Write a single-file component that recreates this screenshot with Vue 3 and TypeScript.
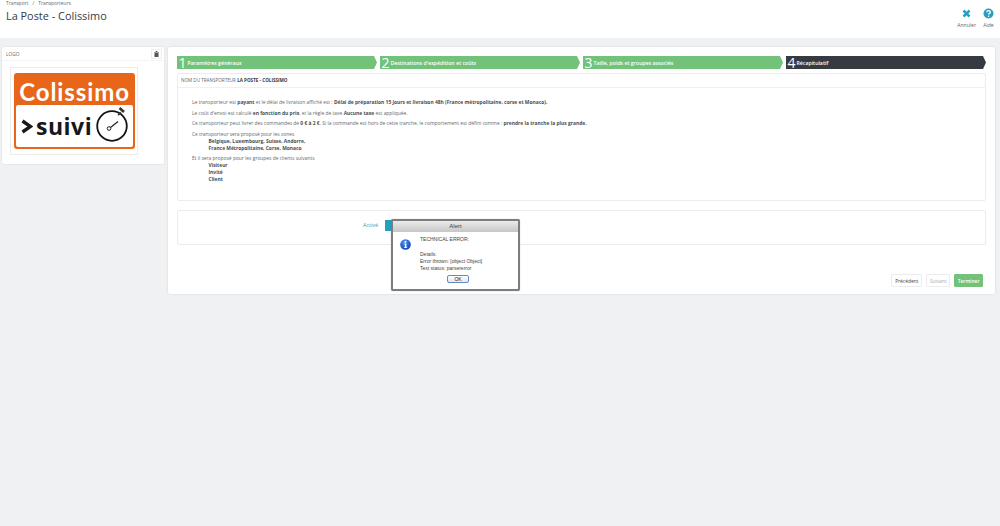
<script setup lang="ts">
const steps = [
  { n: '1', label: 'Paramètres généraux' },
  { n: '2', label: "Destinations d'expédition et coûts" },
  { n: '3', label: 'Taille, poids et groupes associés' },
  { n: '4', label: 'Récapitulatif', current: true },
]
</script>

<template>
  <div class="page">
    <header class="head">
      <div class="head-left">
        <div class="crumbs"><span>Transport</span><span>/</span><span>Transporteurs</span></div>
        <h1>La Poste - Colissimo</h1>
      </div>
      <div class="tools">
        <div class="tool">
          <svg width="11" height="11" viewBox="0 0 11 11"><path d="M1.600 3.400 3.400 1.600 5.500 3.700 7.600 1.600 9.400 3.400 7.300 5.500 9.400 7.600 7.600 9.400 5.500 7.300 3.400 9.400 1.600 7.600 3.700 5.500Z" fill="#25a0c0" /></svg>
          <span>Annuler</span>
        </div>
        <div class="tool">
          <svg width="11" height="11" viewBox="0 0 11 11"><circle cx="5.500" cy="5.500" r="5" fill="#25a0c0" /><path d="M3.700 4.300C3.800 3.200 4.500 2.600 5.500 2.600 6.600 2.600 7.400 3.300 7.400 4.200 7.400 5.300 5.600 5.500 5.600 6.600" fill="none" stroke="#fff" stroke-width="1.300" /><circle cx="5.600" cy="8.200" r=".8" fill="#fff" /></svg>
          <span>Aide</span>
        </div>
      </div>
    </header>

    <main class="body">
      <aside class="logo-panel">
        <div class="logo-head">
          <span>LOGO</span>
          <button class="trash" type="button" aria-label="Supprimer">
            <svg width="5" height="6" viewBox="0 0 5 6"><path d="M0 1h5v.6H0zM1.600 0h1.800v1H1.600zM.5 2h4v4h-4z" fill="#555" /></svg>
          </button>
        </div>
        <div class="thumb">
          <div class="logo">
            <div class="logo-top">Colissimo</div>
            <div class="logo-bottom">
              <svg class="chev" width="12" height="15" viewBox="0 0 12 15"><path d="M1.500 2 9.500 7.500 1.500 13" fill="none" stroke="#1a1a1a" stroke-width="3.400" /></svg>
              <span class="suivi">suivi</span>
              <svg class="watch" width="34" height="38" viewBox="0 0 34 38">
                <circle cx="16" cy="22" r="14.800" fill="#fff" stroke="#141414" stroke-width="1.800" />
                <path d="M23.500 4 28 8" stroke="#333" stroke-width="2.600" />
                <path d="M25 8.500 22 11" stroke="#333" stroke-width="1.800" />
                <path d="M14.500 23.500 22 17.500" stroke="#222" stroke-width="1.300" />
                <circle cx="13" cy="24.500" r="1.800" fill="none" stroke="#222" stroke-width="1" />
              </svg>
            </div>
          </div>
        </div>
      </aside>

      <section class="main-panel">
        <ol class="steps">
          <li v-for="s in steps" :key="s.n" class="step" :class="{ current: s.current }">
            <b>{{ s.n }}</b><span>{{ s.label }}</span>
          </li>
        </ol>

        <div class="card summary">
          <div class="card-head">NOM DU TRANSPORTEUR <strong>LA POSTE - COLISSIMO</strong></div>
          <div class="text">
            <p>Le transporteur est <strong>payant</strong> et le délai de livraison affiché est : <strong>Délai de préparation 15 jours et livraison 48h (France métropolitaine, corse et Monaco).</strong></p>
            <p>Le coût d'envoi est calculé <strong>en fonction du prix</strong>, et la règle de taxe <strong>Aucune taxe</strong> est appliquée.</p>
            <p>Ce transporteur peut livrer des commandes de <strong>0 € à 2 €</strong>. Si la commande est hors de cette tranche, le comportement est défini comme : <strong>prendre la tranche la plus grande.</strong></p>
            <p>Ce transporteur sera proposé pour les zones
              <span class="list"><strong>Belgique, Luxembourg, Suisse, Andorre,</strong><strong>France Métropolitaine, Corse, Monaco</strong></span>
            </p>
            <p>Et il sera proposé pour les groupes de clients suivants
              <span class="list"><strong>Visiteur</strong><strong>Invité</strong><strong>Client</strong></span>
            </p>
          </div>
        </div>

        <div class="card status">
          <span class="status-label">Activé</span>
          <span class="switch"></span>
        </div>

        <div class="actions">
          <button type="button" class="btn">Précédent</button>
          <button type="button" class="btn off">Suivant</button>
          <button type="button" class="btn go">Terminer</button>
        </div>
      </section>
    </main>

    <div class="alert" role="alertdialog">
      <div class="alert-title">Alert</div>
      <div class="alert-body">
        <svg class="info" width="12" height="12" viewBox="0 0 12 12">
          <defs><radialGradient id="ib" cx=".4" cy=".3" r=".8"><stop offset="0" stop-color="#4f8fef" /><stop offset="1" stop-color="#0b3fb0" /></radialGradient></defs>
          <circle cx="6" cy="6" r="5.800" fill="url(#ib)" />
          <circle cx="6" cy="3" r="1.100" fill="#fff" />
          <path d="M4.600 5h2.400v4h.8v.8H4.400V9h.9V5.800h-.7z" fill="#fff" />
        </svg>
        <div class="alert-text">
          <p class="alert-main">TECHNICAL ERROR:</p>
          <p>Details:</p>
          <p>Error thrown: [object Object]</p>
          <p>Text status: parsererror</p>
        </div>
      </div>
      <button type="button" class="ok">OK</button>
    </div>
  </div>
</template>

<style>
html, body { margin: 0; background: #eff1f2; }
</style>

<style scoped>
.page {
  position: relative;
  width: 1000px;
  height: 526px;
  overflow: hidden;
  background: #eff1f2;
  font-family: "Open Sans", sans-serif;
  color: #63676b;
}
.head {
  height: 38px;
  box-sizing: border-box;
  background: #fff;
  display: flex;
  justify-content: space-between;
  padding: 0 6px 0 6px;
}
.crumbs {
  display: flex;
  gap: 4px;
  font-size: 4.900px;
  line-height: 7px;
  color: #666;
}
h1 {
  margin: 1px 0 0;
  font-size: 10.900px;
  line-height: 16px;
  font-weight: 400;
  color: #363a41;
}
.tools {
  display: flex;
  gap: 7px;
  padding-top: 8px;
}
.tool {
  display: flex;
  flex-direction: column;
  align-items: center;
  font-size: 5.100px;
  line-height: 7px;
  color: #666;
  gap: 3px;
}
.body {
  display: flex;
  align-items: flex-start;
  gap: 4px;
  padding: 9px 5px 0 2px;
}
.logo-panel {
  width: 162px;
  height: 117px;
  flex: none;
  box-sizing: border-box;
  background: #fff;
  box-shadow: 0 0 2px rgba(0, 0, 0, .12);
  border-radius: 2px;
}
.logo-head {
  height: 13px;
  display: flex;
  align-items: center;
  justify-content: space-between;
  padding: 0 2px 0 4px;
  font-size: 4.800px;
  color: #666;
  border-bottom: 1px solid #f3f4f5;
}
.trash {
  width: 11px;
  height: 10px;
  padding: 0;
  display: flex;
  align-items: center;
  justify-content: center;
  background: #fff;
  border: 1px solid #eee;
}
.thumb {
  margin: 6px 0 0 8px;
  width: 128px;
  height: 88px;
  box-sizing: border-box;
  padding: 5px 3px;
  background: #fff;
  border: 1px solid #ececec;
}
.logo {
  width: 121px;
  height: 76px;
  box-sizing: border-box;
  background: #e8661a;
  border-radius: 3px;
  padding: 0 2px 2px;
  display: flex;
  flex-direction: column;
}
.logo-top {
  height: 32px;
  font-family: "Lato", sans-serif;
  font-weight: 700;
  font-size: 24px;
  line-height: 37px;
  letter-spacing: .9px;
  text-align: center;
  color: #fff;
}
.logo-bottom {
  flex: 1;
  background: #fff;
  border-radius: 2px;
  display: flex;
  align-items: center;
  padding-left: 5px;
}
.chev { flex: none; }
.suivi {
  margin-left: 3px;
  font-family: "Open Sans", sans-serif;
  font-size: 23px;
  line-height: 30px;
  font-weight: 700;
  letter-spacing: .5px;
  color: #16181a;
}
.watch { flex: none; margin: -6px 0 0 4px; }
.main-panel {
  width: 827px;
  height: 247px;
  flex: none;
  box-sizing: border-box;
  padding: 9px 9px 0;
  background: #fff;
  box-shadow: 0 0 2px rgba(0, 0, 0, .15);
  border-radius: 2px;
}
.steps {
  list-style: none;
  margin: 0;
  padding: 0;
  display: flex;
  gap: 3px;
  height: 13px;
}
.step {
  flex: 1;
  display: flex;
  align-items: center;
  gap: 1px;
  padding-left: 1.500px;
  background: #72c279;
  color: #fff;
  font-size: 5.200px;
  font-weight: 600;
  clip-path: polygon(0 0, calc(100% - 3px) 0, 100% 50%, calc(100% - 3px) 100%, 0 100%);
}
.step b {
  font-size: 14px;
  line-height: 13px;
  font-weight: 400;
}
.step.current { background: #363a41; }
.card {
  margin-top: 4px;
  background: #fff;
  border: 1px solid #ececee;
  border-radius: 2px;
  box-sizing: border-box;
}
.summary { height: 128px; }
.card-head {
  height: 13px;
  padding: 0 3px;
  font-size: 4.600px;
  line-height: 12px;
  color: #666;
  border-bottom: 1px solid #f0f0f0;
}
.card-head strong { color: #363a41; }
.text {
  padding: 11px 14px 0;
  font-size: 4.920px;
  line-height: 7px;
}
.text p { margin: 0 0 3.500px; }
.text strong { font-weight: 700; color: #4a4e52; }
.list {
  display: flex;
  flex-direction: column;
  padding-left: 16.500px;
}
.status {
  margin-top: 9px;
  height: 35px;
  display: flex;
  align-items: flex-start;
  padding: 9px 0 0 185px;
  gap: 7px;
  font-size: 5.400px;
}
.status-label { color: #4b93b8; line-height: 11px; }
.switch { width: 30px; height: 11px; background: #25a0c0; }
.actions {
  display: flex;
  justify-content: flex-end;
  gap: 4px;
  padding-right: 3px;
  margin-top: 29px;
}
.btn {
  height: 13px;
  padding: 0 3px;
  background: #fff;
  border: 1px solid #ececec;
  border-radius: 1px;
  font: 400 4.900px "Open Sans", sans-serif;
  color: #444;
}
.btn.off { color: #aaa; padding: 0 2.500px; }
.btn.go { background: #72c279; border-color: #72c279; color: #fff; font-weight: 600; padding: 0 2.500px; }
.alert {
  position: absolute;
  left: 391px;
  top: 219px;
  width: 129px;
  height: 72px;
  box-sizing: border-box;
  border: 2px solid #7d7d7d;
  border-radius: 2px;
  background: #fff;
  font-family: "Liberation Sans", sans-serif;
  font-size: 5px;
  color: #444;
  box-shadow: 0 0 1px rgba(0, 0, 0, .4);
}
.alert-title {
  height: 11px;
  background: linear-gradient(#ececec, #c6c6c6);
  text-align: center;
  font-size: 6px;
  line-height: 11px;
}
.alert-body {
  display: flex;
  padding: 4px 0 0 7px;
  gap: 9px;
}
.info { margin-top: 3px; flex: none; width: 11px; height: 11px; }
.alert-text p { margin: 0; line-height: 7.300px; }
.alert-main { margin-bottom: 7.500px !important; }
.ok {
  display: block;
  margin: 2px 0 0 54px;
  width: 22px;
  height: 8px;
  padding: 0;
  background: linear-gradient(#fff, #dfe8f5);
  border: 1px solid #5d8ec8;
  border-radius: 2px;
  font: 5px "Liberation Sans", sans-serif;
  line-height: 6px;
  color: #222;
}
</style>
